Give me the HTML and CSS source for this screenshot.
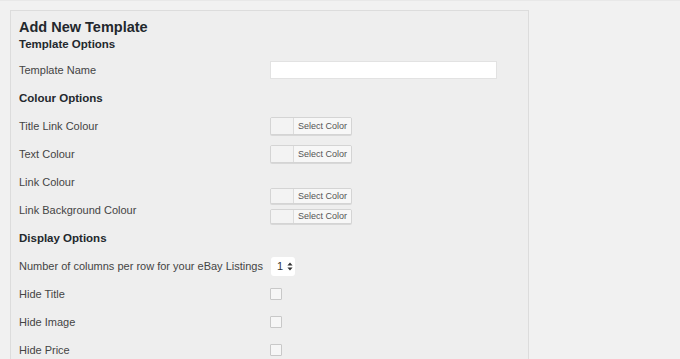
FILE: index.html
```html
<!DOCTYPE html>
<html>
<head>
<meta charset="utf-8">
<link rel="stylesheet" href="styles.css">
</head>
<body>
<div class="page">
  <div class="panel">
    <h2 class="title">Add New Template</h2>
    <h3 class="subtitle">Template Options</h3>
    <div class="form">
      <div class="label">Template Name</div>
      <div class="ctrl"><input class="text" type="text"></div>

      <div class="label section">Colour Options</div>
      <div class="ctrl"></div>

      <div class="label">Title Link Colour</div>
      <div class="ctrl"><span class="color"><span class="swatch"></span><span class="cbtn">Select Color</span></span></div>

      <div class="label">Text Colour</div>
      <div class="ctrl"><span class="color"><span class="swatch"></span><span class="cbtn">Select Color</span></span></div>

      <div class="label">Link Colour</div>
      <div class="ctrl span2">
        <span class="color"><span class="swatch"></span><span class="cbtn">Select Color</span></span>
        <span class="color"><span class="swatch"></span><span class="cbtn">Select Color</span></span>
      </div>
      <div class="label">Link Background Colour</div>

      <div class="label section">Display Options</div>
      <div class="ctrl"></div>

      <div class="label">Number of columns per row for your eBay Listings</div>
      <div class="ctrl"><span class="select">1<svg class="arrows" width="6" height="9" viewBox="0 0 6 9"><path d="M3 0.5 L5.6 3.6 L0.4 3.6 Z M3 8.5 L5.6 5.4 L0.4 5.4 Z" fill="#333"/></svg></span></div>

      <div class="label">Hide Title</div>
      <div class="ctrl"><span class="check"></span></div>

      <div class="label">Hide Image</div>
      <div class="ctrl"><span class="check"></span></div>

      <div class="label">Hide Price</div>
      <div class="ctrl"><span class="check"></span></div>
    </div>
  </div>
</div>
</body>
</html>
```

FILE: styles.css
```css
html, body {
  margin: 0;
  padding: 0;
  background: #f1f1f1;
  height: 100%;
  overflow: hidden;
}
body {
  font-family: "Liberation Sans", Arial, sans-serif;
  color: #444;
}
.page {
  padding: 9px 0 0 10px;
  border-top: 1px solid #e8e8e8;
  box-sizing: border-box;
  height: 100%;
  display: flex;
  flex-direction: column;
  align-items: flex-start;
}
.panel {
  flex: 1;
  width: 509px;
  background: #eeeeee;
  border: 1px solid #dcdcdc;
  border-bottom: none;
  padding: 0 0 0 8px;
  overflow: hidden;
}
.title {
  margin: 8px 0 0 0;
  font-size: 14.5px;
  font-weight: bold;
  color: #23282d;
  line-height: 17px;
}
.subtitle {
  margin: 0;
  font-size: 11.5px;
  font-weight: bold;
  color: #23282d;
  line-height: 16px;
}
.form {
  margin-top: 4px;
  display: grid;
  grid-template-columns: 251px 1fr;
  grid-auto-rows: 28px;
}
.label {
  font-size: 11px;
  display: flex;
  align-items: center;
  color: #444;
  white-space: nowrap;
}
.label.section {
  font-weight: bold;
  color: #23282d;
  font-size: 11.5px;
}
.ctrl {
  display: flex;
  align-items: center;
}
.ctrl.span2 {
  grid-row: span 2;
  flex-direction: column;
  align-items: flex-start;
  justify-content: flex-start;
  padding-top: 20px;
  gap: 5px;
}
.text {
  width: 227px;
  height: 18px;
  box-sizing: border-box;
  border: 1px solid #e2e2e2;
  background: #fff;
  margin: 0;
  padding: 0;
}
.color {
  display: inline-flex;
  height: 18px;
  width: 82px;
  box-sizing: border-box;
  border: 1px solid #d4d4d4;
  border-radius: 2px;
  background: #f7f7f7;
  box-shadow: 0 1px 0 #d8d8d8;
  overflow: hidden;
}
.swatch {
  width: 22px;
  border-right: 1px solid #dcdcdc;
  background: #f3f3f3;
}
.cbtn {
  flex: 1;
  font-size: 9px;
  color: #555;
  display: flex;
  align-items: center;
  justify-content: center;
  background: #f7f7f7;
}
.select {
  display: inline-flex;
  align-items: center;
  gap: 4px;
  width: 24px;
  height: 19px;
  box-sizing: border-box;
  padding-left: 6px;
  background: #fff;
  border-radius: 3px;
  font-size: 11px;
  color: #333;
  margin-left: 1px;
}
.arrows {
  display: block;
}
.check {
  display: inline-block;
  width: 12px;
  height: 12px;
  box-sizing: border-box;
  border: 1px solid #c8c8c8;
  background: #f6f6f6;
  border-radius: 1px;
}
```
